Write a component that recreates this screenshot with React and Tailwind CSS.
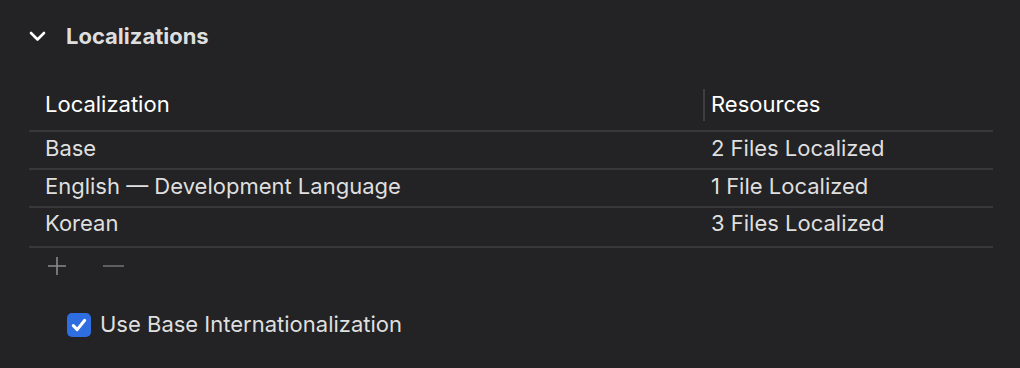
import React from 'react';

const rows = [
  { name: 'Base', res: '2 Files Localized', h: 'h-[38px] pb-[3px]' },
  { name: 'English — Development Language', res: '1 File Localized', h: 'h-[38px] pb-[3px]' },
  { name: 'Korean', res: '3 Files Localized', h: 'h-[40px] pb-[7px]' },
];

export default function App() {
  return (
    <div className="w-[1020px] h-[368px] bg-[#232325] text-[#e0e0e0] overflow-hidden" style={{ fontFamily: 'Inter, "Noto Sans", sans-serif' }}>
      {/* Section header */}
      <div className="flex items-center h-[36px] mt-[18px] pl-[29px]">
        <svg width="17" height="11" viewBox="0 0 17 11" className="mr-[20px]">
          <path d="M2 2 L8.5 8.5 L15 2" fill="none" stroke="#ffffff" strokeWidth="2.6" strokeLinecap="round" strokeLinejoin="round" />
        </svg>
        <span className="text-[22px] font-bold text-[#dedede]">Localizations</span>
      </div>

      {/* Table */}
      <div className="ml-[29px] w-[964px] mt-[26px]">
        <div className="flex items-center h-[52px] pb-[1px] border-b-2 border-[#38383a]">
          <div className="w-[674px] pl-[16px] text-[22px] text-white">Localization</div>
          <div className="w-[2px] h-[32px] bg-[#3e3e40]" />
          <div className="pl-[6px] text-[22px] text-white">Resources</div>
        </div>
        {rows.map((r) => (
          <div key={r.name} className={`flex items-center ${r.h} border-b-2 border-[#38383a]`}>
            <div className="w-[676px] pl-[16px] text-[22px] text-[#dfdfdf]">{r.name}</div>
            <div className="pl-[6px] text-[22px] text-[#dfdfdf]">{r.res}</div>
          </div>
        ))}
        <div className="flex items-center h-[36px] pl-[19px] gap-[37px]">
          <svg width="18" height="18" viewBox="0 0 18 18">
            <path d="M9 0 V18 M0 9 H18" stroke="#8a8a8c" strokeWidth="1.6" />
          </svg>
          <svg width="21" height="18" viewBox="0 0 21 18">
            <path d="M0 9 H21" stroke="#6e6e70" strokeWidth="1.6" />
          </svg>
        </div>
      </div>

      {/* Checkbox */}
      <div className="flex items-center gap-[9px] ml-[67px] mt-[24px]">
        <div className="w-[24px] h-[24px] rounded-[5px] bg-[#2f6ee0] flex items-center justify-center">
          <svg width="16" height="14" viewBox="0 0 16 14">
            <path d="M2.3 7.6 L6.2 11.6 L13.7 2.3" fill="none" stroke="#ffffff" strokeWidth="3" strokeLinecap="round" strokeLinejoin="round" />
          </svg>
        </div>
        <span className="text-[22px] text-[#dfdfdf]">Use Base Internationalization</span>
      </div>
    </div>
  );
}
